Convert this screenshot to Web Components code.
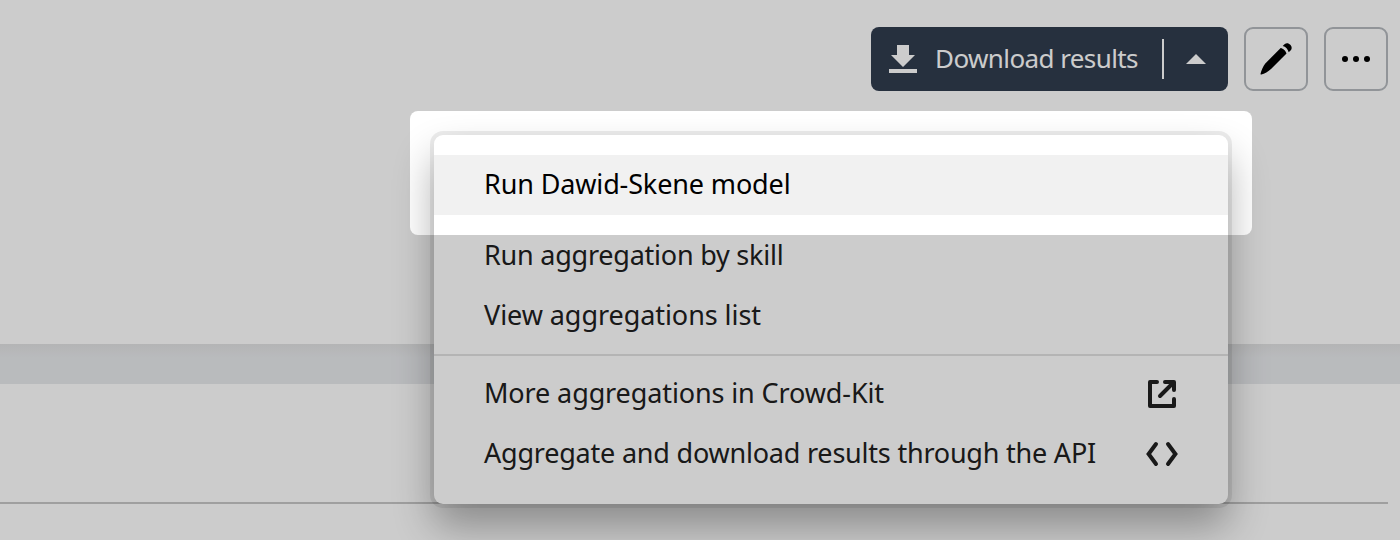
<!DOCTYPE html>
<html lang="en">
<head>
<meta charset="utf-8">
<title>Download results</title>
<style>
html,body{margin:0;height:100%;overflow:hidden;background:#fff}
body{font-family:"Noto Sans","Open Sans",sans-serif;font-size:27px;color:#000}
</style>
</head>
<body>
<results-page></results-page>
<script>
const define = (name, html, setup) => customElements.define(name, class extends HTMLElement {
  connectedCallback() {
    if (this.shadowRoot) return;
    const t = document.createElement('template');
    t.innerHTML = html;
    this.attachShadow({mode: 'open'}).appendChild(t.content.cloneNode(true));
    if (setup) setup.call(this);
  }
});

// A single-line label whose tracking is adjusted to fill its "fit" width.
define('fit-label', `<style>
:host{display:block;white-space:nowrap;line-height:58px;padding-bottom:2px}
span{display:inline-block}
</style><span><slot></slot></span>`, function () {
  const s = this.shadowRoot.querySelector('span');
  const n = this.textContent.length;
  s.style.letterSpacing = '0.001px';
  const w = s.getBoundingClientRect().width;
  s.style.letterSpacing = ((+this.getAttribute('fit') - w) / n).toFixed(3) + 'px';
});

define('ui-icon', `<style>:host{display:block;flex:none}svg{display:block;overflow:visible}</style><div></div>`, function () {
  const icons = {
    download: '<svg width="28" height="28" fill="currentColor"><path d="M8 0h12v10h6L14 22 2 10h6zM0 24h28v4H0z"/></svg>',
    up: '<svg width="20" height="10" fill="currentColor"><path d="M0 10 10 0l10 10z"/></svg>',
    edit: '<svg width="32" height="32" fill="currentColor"><path d="M20.700 4.900c2.400.4 5.300 3 5.800 5.700L11 26C8.500 28.500 4.300 30.800 1.400 31.500c-.7.200-1-.200-.8-.9C1.200 27.700 3.200 22.800 5.300 20.400zM22.700 3 24.500 1.300C26.600-.4 28.700.2 30.300 1.800c1.500 1.600 1.900 3.700.5 5.500L28.700 9.300C28.100 6.300 25.700 3.700 22.700 3z"/></svg>',
    dots: '<svg width="28" height="6" fill="currentColor"><circle cx="3" cy="3" r="3"/><circle cx="14" cy="3" r="3"/><circle cx="25" cy="3" r="3"/></svg>',
    external: '<svg width="28" height="28" fill="none" stroke="currentColor" stroke-width="4" stroke-linecap="round" stroke-linejoin="round"><path d="M9 2H2v24h24v-7M17 2h9v8M25 3 12 16"/></svg>',
    code: '<svg width="32" height="24" fill="none" stroke="currentColor" stroke-width="4" stroke-linecap="round" stroke-linejoin="miter"><path d="M10 2 2.600 12 10 22M22 2l7.400 10L22 22"/></svg>'
  };
  this.shadowRoot.querySelector('div').innerHTML = icons[this.getAttribute('name')];
});

define('split-button', `<style>
:host{display:flex;align-items:center;box-sizing:border-box;width:357px;height:64px;padding:0 22px 0 18px;border-radius:8px;background:#303c4e;color:#fff}
::slotted(fit-label){margin-left:18px;flex:1;font-size:26px}
i{width:2px;height:40px;background:#fff;margin-right:22px}
</style><ui-icon name="download"></ui-icon><slot></slot><i></i><ui-icon name="up"></ui-icon>`);

define('icon-button', `<style>
:host{display:flex;align-items:center;justify-content:center;box-sizing:border-box;width:64px;height:64px;border:2px solid #b6babf;border-radius:9px;background:#fff}
</style><slot></slot>`);

define('menu-item', `<style>
:host{display:flex;align-items:center;justify-content:space-between;height:60px;padding:0 50px;color:#202020}
:host([active]){background:#f1f1f1;color:#000;margin-bottom:11px}
</style><slot></slot><slot name="icon"></slot>`);

define('drop-menu', `<style>
:host{display:block;box-sizing:border-box;width:794px;height:369px;padding-top:20px;background:#fff;border-radius:9px;box-shadow:0 0 0 4px rgba(0,0,0,.07),0 22px 40px rgba(0,0,0,.32)}
</style><slot></slot>`);

define('spot-light', `<style>
:host{display:block;width:842px;height:124px;border-radius:8px;box-shadow:0 0 0 1500px rgba(0,0,0,.2);pointer-events:none}
</style>`);

define('results-page', `<style>
:host{display:flex;flex-direction:column;position:relative;height:540px;overflow:hidden}
header{display:flex;justify-content:flex-end;gap:16px;box-sizing:border-box;height:344px;padding:27px 12px 0 0}
.band{height:40px;background:linear-gradient(#e1e2e3,#e8eaed 14px,#e8eaed)}
section{height:118px;margin-right:12px;border-bottom:2px solid #c7c7c7}
drop-menu{position:absolute;left:434px;top:135px}
spot-light{position:absolute;left:410px;top:111px}
hr{border:0;margin:8px 0;height:2px;background:#e1e1e1}
</style>
<header>
<split-button><fit-label fit="203">Download results</fit-label></split-button>
<icon-button><ui-icon name="edit"></ui-icon></icon-button>
<icon-button><ui-icon name="dots"></ui-icon></icon-button>
</header>
<div class="band"></div>
<section></section>
<drop-menu>
<menu-item active><fit-label fit="306.500">Run Dawid-Skene model</fit-label></menu-item>
<menu-item><fit-label fit="299.500">Run aggregation by skill</fit-label></menu-item>
<menu-item><fit-label fit="277">View aggregations list</fit-label></menu-item>
<hr>
<menu-item><fit-label fit="400">More aggregations in Crowd-Kit</fit-label><ui-icon slot="icon" name="external" style="margin-right:2px"></ui-icon></menu-item>
<menu-item><fit-label fit="612">Aggregate and download results through the API</fit-label><ui-icon slot="icon" name="code"></ui-icon></menu-item>
</drop-menu>
<spot-light></spot-light>`);
</script>
</body>
</html>
